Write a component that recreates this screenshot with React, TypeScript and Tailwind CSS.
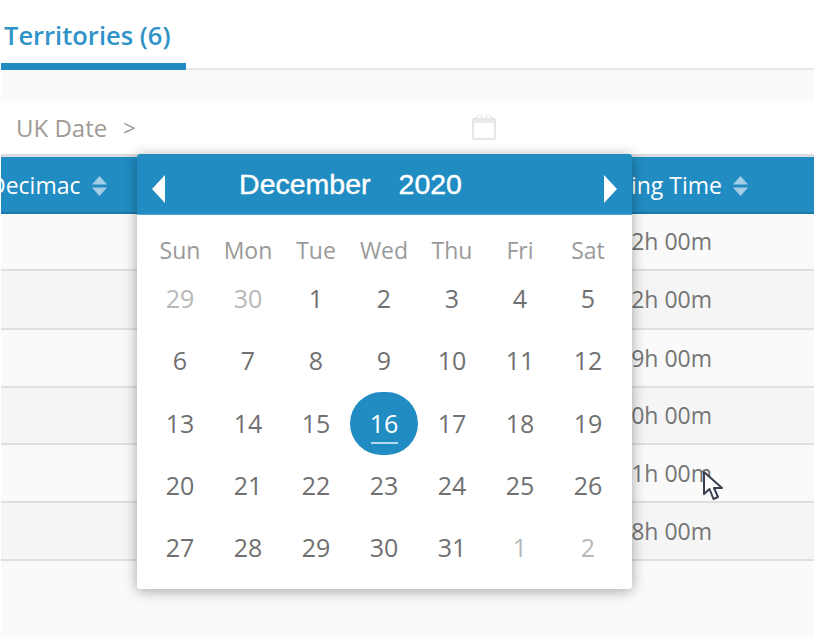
const openSans = { fontFamily: '"Open Sans", sans-serif' }

const weekdays = ['Sun', 'Mon', 'Tue', 'Wed', 'Thu', 'Fri', 'Sat']

const days = [
  [29, 30, 1, 2, 3, 4, 5],
  [6, 7, 8, 9, 10, 11, 12],
  [13, 14, 15, 16, 17, 18, 19],
  [20, 21, 22, 23, 24, 25, 26],
  [27, 28, 29, 30, 31, 1, 2],
]

const rows = [
  { time: '2h 00m', bg: 'bg-[#fafafa]', h: 'h-[57px]' },
  { time: '2h 00m', bg: 'bg-[#f5f5f5]', h: 'h-[59px]' },
  { time: '9h 00m', bg: 'bg-[#fafafa]', h: 'h-[58px]' },
  { time: '0h 00m', bg: 'bg-[#f5f5f5]', h: 'h-[57px]' },
  { time: '1h 00m', bg: 'bg-[#fafafa]', h: 'h-[58px]' },
  { time: '8h 00m', bg: 'bg-[#f5f5f5]', h: 'h-[58px]' },
]

function SortIcon() {
  return (
    <svg width="15" height="20" viewBox="0 0 15 20" className="shrink-0">
      <path d="M7.5 0 L15 8.5 H0 Z" fill="#a3cee5" />
      <path d="M7.5 20 L15 11.5 H0 Z" fill="#a3cee5" />
    </svg>
  )
}

function CalendarIcon() {
  return (
    <svg width="26" height="28" viewBox="0 0 26 28" fill="none">
      <path
        d="M2 5 H5 A3.5 3.5 0 0 1 12 5 H14 A3.5 3.5 0 0 1 21 5 H24 V10 H2 Z"
        fill="#ececec"
      />
      <rect x="2" y="6" width="22" height="20" rx="1" stroke="#e6e6e6" strokeWidth="2" />
      <path d="M7 5 V2.5 H10 V5 M16 5 V2.5 H19 V5" fill="#ffffff" />
    </svg>
  )
}

function Cursor() {
  return (
    <svg width="22" height="32" viewBox="0 0 22 32" className="absolute left-[702px] top-[470px]">
      <path
        d="M2 2 V24 L7.5 19 L11.5 29 L16 27 L12 18 H20 Z"
        fill="#fff"
        stroke="#3c4050"
        strokeWidth="2"
        strokeLinejoin="round"
      />
    </svg>
  )
}

function DatePopover() {
  return (
    <div className="absolute left-[137px] top-[154px] w-[495px] h-[435px] bg-white rounded-[3px] shadow-[0_2px_14px_rgba(0,0,0,0.35)]">
      <div className="h-[61px] bg-[#218cc2] rounded-t-[3px] border-b border-[#4fa6d3] flex items-center justify-between pl-[14px] pr-[14px] text-white">
        <svg width="15" height="30" viewBox="0 0 15 30" className="mt-[9px]">
          <path d="M14 1 V29 L1 15 Z" fill="#fff" />
        </svg>
        <div
          className="flex gap-[28px] text-[28.5px] leading-none mr-[68px] [-webkit-text-stroke:0.4px_white]"
          style={{ fontFamily: '"Liberation Sans", sans-serif' }}
        >
          <span>December</span>
          <span>2020</span>
        </div>
        <svg width="15" height="30" viewBox="0 0 15 30" className="mt-[9px]">
          <path d="M1 1 V29 L14 15 Z" fill="#fff" />
        </svg>
      </div>
      <div className="pl-[9px] pr-[10px]">
        <div className="grid grid-cols-7 h-[52.5px] pt-[19px] text-[23px] leading-[32px] text-[#9a9a9a] text-center">
          {weekdays.map((d) => (
            <div key={d}>{d}</div>
          ))}
        </div>
        {days.map((week, i) => (
          <div key={i} className="grid grid-cols-7 h-[62.25px] text-[25px] text-center items-center">
            {week.map((d, j) => {
              const muted = (i === 0 && d > 20) || (i === 4 && d < 10)
              if (i === 2 && d === 16) {
                return (
                  <div key={j} className="flex justify-center">
                    <div className="relative w-[69px] h-[63px] rounded-full bg-[#218cc2] text-white flex items-center justify-center">
                      {d}
                      <span className="absolute left-[21px] right-[20px] bottom-[11px] h-[2px] bg-[#b5d9ec]" />
                    </div>
                  </div>
                )
              }
              return (
                <div key={j} className={muted ? 'text-[#b8b8b8]' : 'text-[#707070]'}>
                  {d}
                </div>
              )
            })}
          </div>
        ))}
      </div>
    </div>
  )
}

export default function App() {
  return (
    <div className="relative w-[814px] h-[637px] overflow-hidden bg-white pl-px" style={openSans}>
      <div className="h-[70px] border-b-2 border-[#e8e8e8]">
        <div className="w-[185px] h-[70px] border-b-[7px] border-[#218cc2] pl-[3px] pt-[17px] text-[25.5px] leading-[36px] font-semibold text-[#2f93c8] whitespace-nowrap -mb-[2px]">
          Territories (6)
        </div>
      </div>
      <div className="h-[31px] bg-[#fafafa]" />
      <div className="h-[53px] bg-white flex items-center pl-[15px] text-[24px] text-[#a09a96] relative">
        <span>UK Date</span>
        <span className="ml-[16px] text-[22px]">&gt;</span>
        <div className="absolute left-[470px] top-[12px]">
          <CalendarIcon />
        </div>
      </div>
      <div className="h-[3px] bg-[#dcdcdc]" />
      <div className="h-[57px] bg-[#218cc2] border-b-2 border-[#1b78a8] pt-[2px] flex items-center justify-between text-white text-[23px] font-medium">
        <div className="flex items-center gap-[11px] -ml-[12px]">
          <span>Decimac</span>
          <SortIcon />
        </div>
        <div className="flex items-center gap-[11px] mr-[66px]">
          <span>ing Time</span>
          <SortIcon />
        </div>
      </div>
      {rows.map((r, i) => (
        <div
          key={i}
          className={`${r.bg} ${r.h} border-b-2 border-[#dfdfdf] flex items-center justify-end pr-[102px] text-[23px] text-[#757575]`}
        >
          {r.time}
        </div>
      ))}
      <div className="h-[76px] bg-[#fafafa]" />
      <DatePopover />
      <Cursor />
    </div>
  )
}
